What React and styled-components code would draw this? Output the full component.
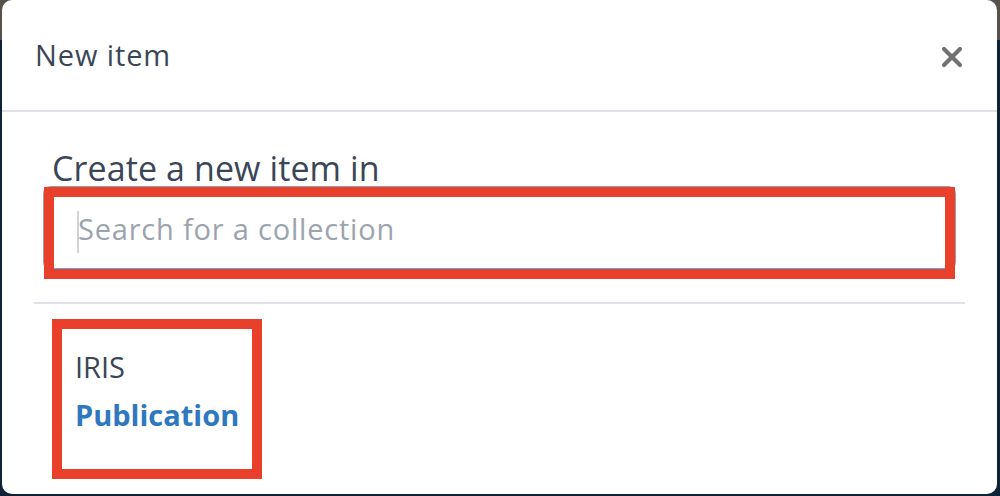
import React from "react";
import styled, { createGlobalStyle } from "styled-components";

const GlobalStyle = createGlobalStyle`
  html, body {
    margin: 0;
    padding: 0;
  }
  body {
    font-family: "Open Sans", "Noto Sans", sans-serif;
    background: linear-gradient(180deg, #57514b 0, #57514b 40px, #0f2338 40px);
    height: 496px;
    overflow: hidden;
  }
`;

const Backdrop = styled.div`
  display: flex;
  padding: 0 3px 2px 2px;
  height: 496px;
  box-sizing: border-box;
`;

const Modal = styled.div`
  flex: 1;
  background: #fff;
  border-radius: 10px;
  display: flex;
  flex-direction: column;
`;

const Header = styled.div`
  display: flex;
  align-items: center;
  justify-content: space-between;
  height: 110px;
  padding: 0 32px 0 33px;
  border-bottom: 2px solid #dee2e6;
`;

const Title = styled.h5`
  margin: 0;
  font-size: 29px;
  font-weight: 400;
  letter-spacing: 0.9px;
  color: #3a4656;
  padding-bottom: 1px;
`;

const CloseButton = styled.button`
  border: 0;
  background: transparent;
  padding: 0;
  width: 26px;
  height: 26px;
  display: flex;
  align-items: center;
  justify-content: center;
  cursor: pointer;
  margin-top: 4px;
`;

const Body = styled.div`
  padding: 0 32px;
`;

const Section = styled.div`
  padding: 38px 9px 32px;
  border-bottom: 2px solid #dee2e6;
`;

const Heading = styled.h4`
  margin: 0 0 0 9px;
  font-size: 34px;
  font-weight: 400;
  line-height: 36px;
  letter-spacing: 0.1px;
  color: #3a4656;
`;

const Annotated = styled.div`
  position: relative;
  display: ${(p) => (p.$inline ? "inline-block" : "block")};
`;

const Marker = styled.div`
  position: absolute;
  top: ${(p) => p.$top}px;
  left: ${(p) => p.$left}px;
  right: ${(p) => p.$right}px;
  bottom: ${(p) => p.$bottom}px;
  border: 10px solid #e8402a;
  pointer-events: none;
`;

const SearchInput = styled.input`
  display: block;
  width: 100%;
  box-sizing: border-box;
  height: 84px;
  padding: 0 20px 0 33px;
  border: 2px solid #9a9fa5;
  border-bottom-color: #5aa9e6;
  border-radius: 8px;
  font-family: inherit;
  font-size: 29px;
  letter-spacing: 0.8px;
  color: #3a4656;
  outline: none;
  &::placeholder {
    color: #9ba4ae;
  }
`;

const Caret = styled.span`
  position: absolute;
  left: 34px;
  top: 25px;
  width: 2px;
  height: 42px;
  background: #cfd3d7;
`;

const List = styled.div`
  padding: 15px 0 0 18px;
`;

const Item = styled.div`
  width: 210px;
  height: 160px;
  padding: 30px 0 0 23px;
  box-sizing: border-box;
  display: flex;
  flex-direction: column;
  gap: 12px;
`;

const Parent = styled.div`
  font-size: 29px;
  color: #3a4656;
  line-height: 36px;
`;

const Collection = styled.div`
  font-size: 29px;
  font-weight: 700;
  color: #2f78c0;
  line-height: 36px;
`;

export default function App() {
  return (
    <>
      <GlobalStyle />
      <Backdrop>
        <Modal>
          <Header>
            <Title>New item</Title>
            <CloseButton aria-label="Close">
              <svg width="24" height="24" viewBox="0 0 24 24">
                <path
                  d="M4 4 L20 20 M20 4 L4 20"
                  stroke="#727272"
                  strokeWidth="4.2"
                  strokeLinecap="round"
                />
              </svg>
            </CloseButton>
          </Header>
          <Body>
            <Section>
              <Heading>Create a new item in</Heading>
              <Annotated>
                <SearchInput placeholder="Search for a collection" />
                <Caret />
                <Marker $top={1} $left={1} $right={1} $bottom={-9} />
              </Annotated>
            </Section>
            <List>
              <Annotated $inline>
                <Item>
                  <Parent>IRIS</Parent>
                  <Collection>Publication</Collection>
                </Item>
                <Marker $top={0} $left={0} $right={0} $bottom={0} />
              </Annotated>
            </List>
          </Body>
        </Modal>
      </Backdrop>
    </>
  );
}
